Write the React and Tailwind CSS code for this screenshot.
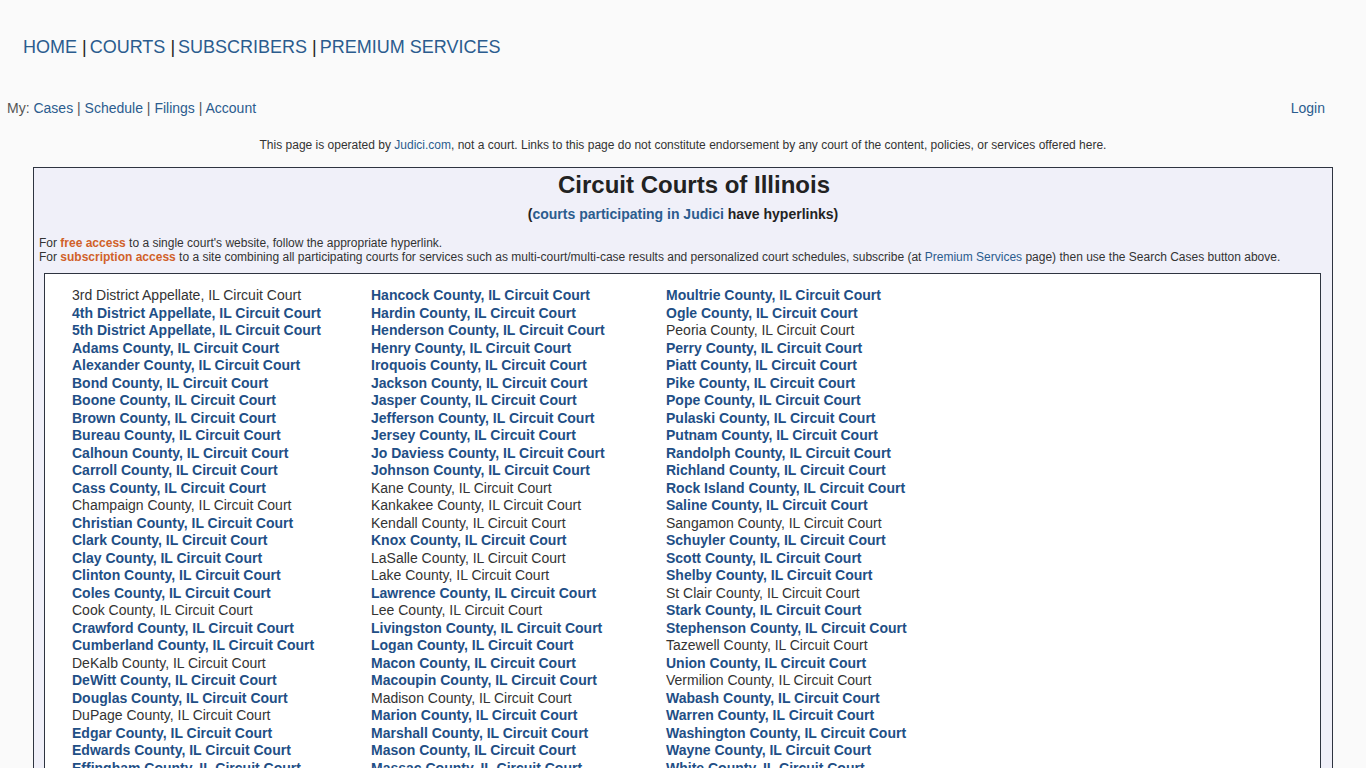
import React from 'react';

const LINK = 'text-[#1f4f86] font-bold';
const PLAIN = 'text-[#333333]';

const col1 = [
  ['3rd District Appellate', false], ['4th District Appellate', true], ['5th District Appellate', true],
  ['Adams County', true], ['Alexander County', true], ['Bond County', true], ['Boone County', true],
  ['Brown County', true], ['Bureau County', true], ['Calhoun County', true], ['Carroll County', true],
  ['Cass County', true], ['Champaign County', false], ['Christian County', true], ['Clark County', true],
  ['Clay County', true], ['Clinton County', true], ['Coles County', true], ['Cook County', false],
  ['Crawford County', true], ['Cumberland County', true], ['DeKalb County', false], ['DeWitt County', true],
  ['Douglas County', true], ['DuPage County', false], ['Edgar County', true], ['Edwards County', true],
  ['Effingham County', true], ['Fayette County', true], ['Ford County', true], ['Franklin County', true],
  ['Fulton County', true], ['Gallatin County', true], ['Greene County', true], ['Grundy County', true],
  ['Hamilton County', true],
];
const col2 = [
  ['Hancock County', true], ['Hardin County', true], ['Henderson County', true], ['Henry County', true],
  ['Iroquois County', true], ['Jackson County', true], ['Jasper County', true], ['Jefferson County', true],
  ['Jersey County', true], ['Jo Daviess County', true], ['Johnson County', true], ['Kane County', false],
  ['Kankakee County', false], ['Kendall County', false], ['Knox County', true], ['LaSalle County', false],
  ['Lake County', false], ['Lawrence County', true], ['Lee County', false], ['Livingston County', true],
  ['Logan County', true], ['Macon County', true], ['Macoupin County', true], ['Madison County', false],
  ['Marion County', true], ['Marshall County', true], ['Mason County', true], ['Massac County', true],
  ['McDonough County', true], ['McHenry County', false], ['McLean County', false], ['Menard County', true],
  ['Mercer County', true], ['Monroe County', true], ['Montgomery County', true], ['Morgan County', true],
];
const col3 = [
  ['Moultrie County', true], ['Ogle County', true], ['Peoria County', false], ['Perry County', true],
  ['Piatt County', true], ['Pike County', true], ['Pope County', true], ['Pulaski County', true],
  ['Putnam County', true], ['Randolph County', true], ['Richland County', true], ['Rock Island County', true],
  ['Saline County', true], ['Sangamon County', false], ['Schuyler County', true], ['Scott County', true],
  ['Shelby County', true], ['St Clair County', false], ['Stark County', true], ['Stephenson County', true],
  ['Tazewell County', false], ['Union County', true], ['Vermilion County', false], ['Wabash County', true],
  ['Warren County', true], ['Washington County', true], ['Wayne County', true], ['White County', true],
  ['Whiteside County', true], ['Will County', false], ['Williamson County', true], ['Winnebago County', false],
  ['Woodford County', true],
];

const CourtColumn = ({ items, width }) => (
  <div className={`flex flex-col ${width}`}>
    {items.map(([name, linked]) => (
      <div key={name} className={`leading-[17.5px] whitespace-nowrap ${linked ? LINK : PLAIN}`}>
        {name}, IL Circuit Court
      </div>
    ))}
  </div>
);

const Sep = () => <span className="text-[#222] mr-[3px]"> |</span>;

export default function App() {
  return (
    <div className="min-h-screen bg-[#fafafa] text-[#333] font-['Liberation_Sans',Arial,sans-serif]">
      <nav className="pt-[37px] pl-[23px] text-[18px] leading-[21px] text-[#2b5c8e]">
        <span>HOME</span><Sep /><span>COURTS</span><Sep /><span>SUBSCRIBERS</span><Sep /><span>PREMIUM SERVICES</span>
      </nav>

      <div className="flex justify-between items-center mt-[42px] pl-[7px] pr-[41px] text-[14px] leading-[16px]">
        <div className="text-[#555]">
          My: <span className="text-[#2b5c8e]">Cases</span> | <span className="text-[#2b5c8e]">Schedule</span> | <span className="text-[#2b5c8e]">Filings</span> | <span className="text-[#2b5c8e]">Account</span>
        </div>
        <div className="text-[#2b5c8e]">Login</div>
      </div>

      <p className="mt-[22px] text-center text-[12px] leading-[14px] text-[#333]">
        This page is operated by <span className="text-[#2b5c8e]">Judici.com</span>, not a court. Links to this page do not constitute endorsement by any court of the content, policies, or services offered here.
      </p>

      <div className="mx-[33px] mt-[15px] border border-[#2e3440] bg-[#f0f0f9] pb-[11px]">
        <h1 className="pt-[3px] pl-[22px] text-center text-[24px] leading-[28px] font-bold text-[#222]">Circuit Courts of Illinois</h1>
        <p className="mt-[7px] text-center text-[14px] leading-[16px] font-bold text-[#222]">
          (<span className="text-[#2b5c8e]">courts participating in Judici</span> have hyperlinks)
        </p>
        <div className="mt-[14px] px-[5px] text-[12px] leading-[14px] text-[#333]">
          <div>For <span className="font-bold text-[#d0612a]">free access</span> to a single court's website, follow the appropriate hyperlink.</div>
          <div>
            For <span className="font-bold text-[#d0612a]">subscription access</span> to a site combining all participating courts for services such as multi-court/multi-case results and personalized court schedules, subscribe (at <span className="text-[#2b5c8e]">Premium Services</span> page) then use the Search Cases button above.
          </div>
        </div>
        <div className="mt-[9px] ml-[10px] mr-[11px] border border-[#2e3440] bg-white pt-[13px] pb-[12px] pl-[27px] text-[14px] flex">
          <CourtColumn items={col1} width="w-[299px]" />
          <CourtColumn items={col2} width="w-[295px]" />
          <CourtColumn items={col3} width="w-[300px]" />
        </div>
      </div>
    </div>
  );
}
